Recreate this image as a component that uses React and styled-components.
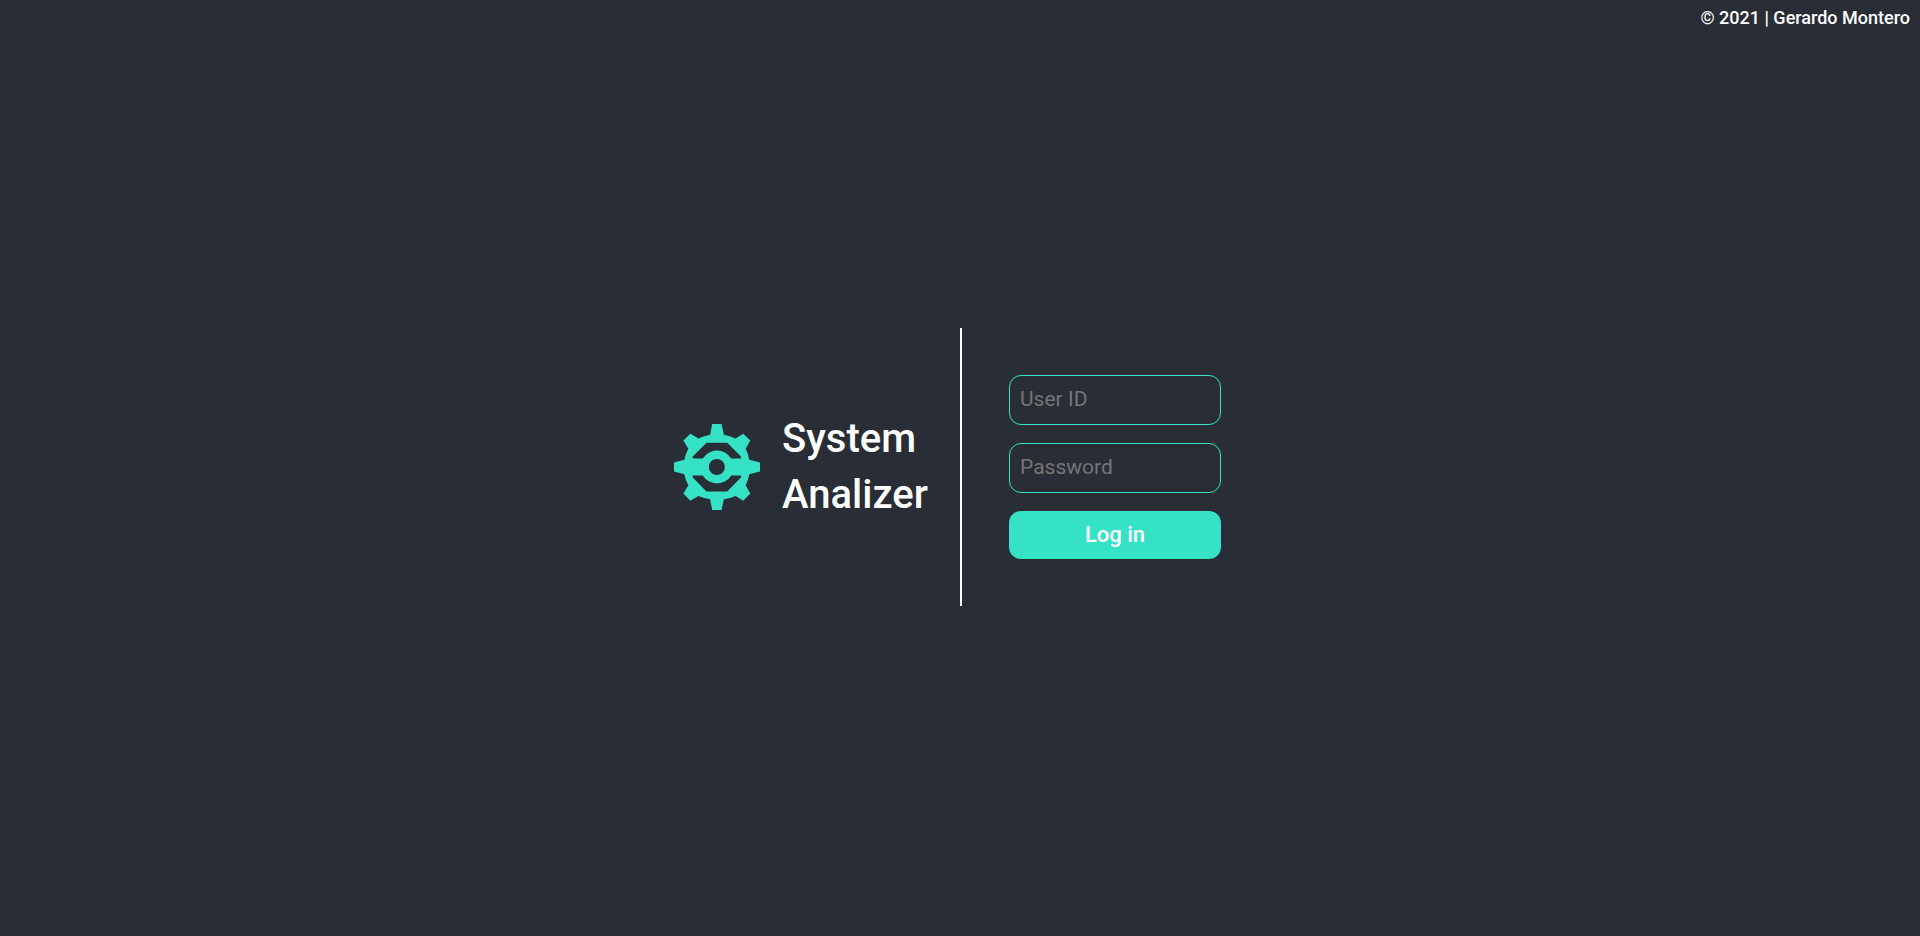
import React from "react";
import styled, { createGlobalStyle } from "styled-components";

const GlobalStyle = createGlobalStyle`
  *, *::before, *::after { box-sizing: border-box; }
  body {
    margin: 0;
    background: #292d36;
    color: #ffffff;
    font-family: Roboto, "Liberation Sans", sans-serif;
  }
`;

const Page = styled.div`
  display: grid;
  grid-template-rows: 36px 1fr 38px;
  min-height: 100vh;
`;

const Credit = styled.header`
  padding: 0 10px;
  text-align: right;
  font-size: 18px;
  font-weight: 500;
  line-height: 36px;
`;

const Main = styled.main`
  display: grid;
  grid-template-columns: 1fr 1fr;
  align-content: center;
`;

const Brand = styled.section`
  display: flex;
  align-items: center;
  justify-content: flex-end;
  gap: 22px;
  padding-right: 30px;
`;

const Logo = styled.svg`
  flex: none;
  width: 86px;
  height: 86px;
  fill: #36e2c6;
`;

const Title = styled.h1`
  width: 148px;
  margin: 0;
  font-size: 40px;
  font-weight: 500;
  line-height: 56px;
`;

const LoginForm = styled.form`
  display: flex;
  flex-direction: column;
  align-items: flex-start;
  gap: 18px;
  padding: 47px;
  border-left: 2px solid #ffffff;
`;

const Field = styled.input`
  width: 212px;
  height: 50px;
  padding: 0 10px 2px;
  border: 1px solid #36e2c6;
  border-radius: 12px;
  background: transparent;
  color: #ffffff;
  font-family: inherit;
  font-size: 21px;

  &::placeholder { color: #757575; }
`;

const SubmitButton = styled.button`
  width: 212px;
  height: 48px;
  padding: 0 0 2px;
  border: 0;
  border-radius: 12px;
  background: #36e2c6;
  color: #ffffff;
  font-family: inherit;
  font-size: 22px;
  font-weight: 500;
  cursor: pointer;
`;

function GearLogo() {
  return (
    <Logo viewBox="31 30 257 257" aria-hidden="true">
      <path
        fillRule="evenodd"
        d="M145 30H173L180 62Q198 65 215 73L238 59L259 79L245 104Q253 119 256 137L288 145V172L256 180Q253 198 245 213L259 238L238 259L215 245Q198 253 180 255L173 287H145L139 255Q121 252 104 245L80 259L59 238L74 213Q65 198 62 180L31 172V145L62 137Q65 119 74 104L59 79L80 59L104 73Q121 65 139 62Z
        M128 86L87 127V133H117A50 50 0 0 1 202 133H231V127L190 86Z
        M87 184V190L128 232H190L231 190V184H202A50 50 0 0 1 117 184Z
        M183 158.500A24 24 0 1 0 135 158.500A24 24 0 1 0 183 158.500Z"
      />
    </Logo>
  );
}

export default function App() {
  return (
    <>
      <GlobalStyle />
      <Page>
        <Credit>© 2021 | Gerardo Montero</Credit>
        <Main>
          <Brand>
            <GearLogo />
            <Title>System Analizer</Title>
          </Brand>
          <LoginForm onSubmit={(event) => event.preventDefault()}>
            <Field type="text" placeholder="User ID" aria-label="User ID" autoComplete="username" />
            <Field type="password" placeholder="Password" aria-label="Password" autoComplete="current-password" />
            <SubmitButton type="submit">Log in</SubmitButton>
          </LoginForm>
        </Main>
      </Page>
    </>
  );
}
